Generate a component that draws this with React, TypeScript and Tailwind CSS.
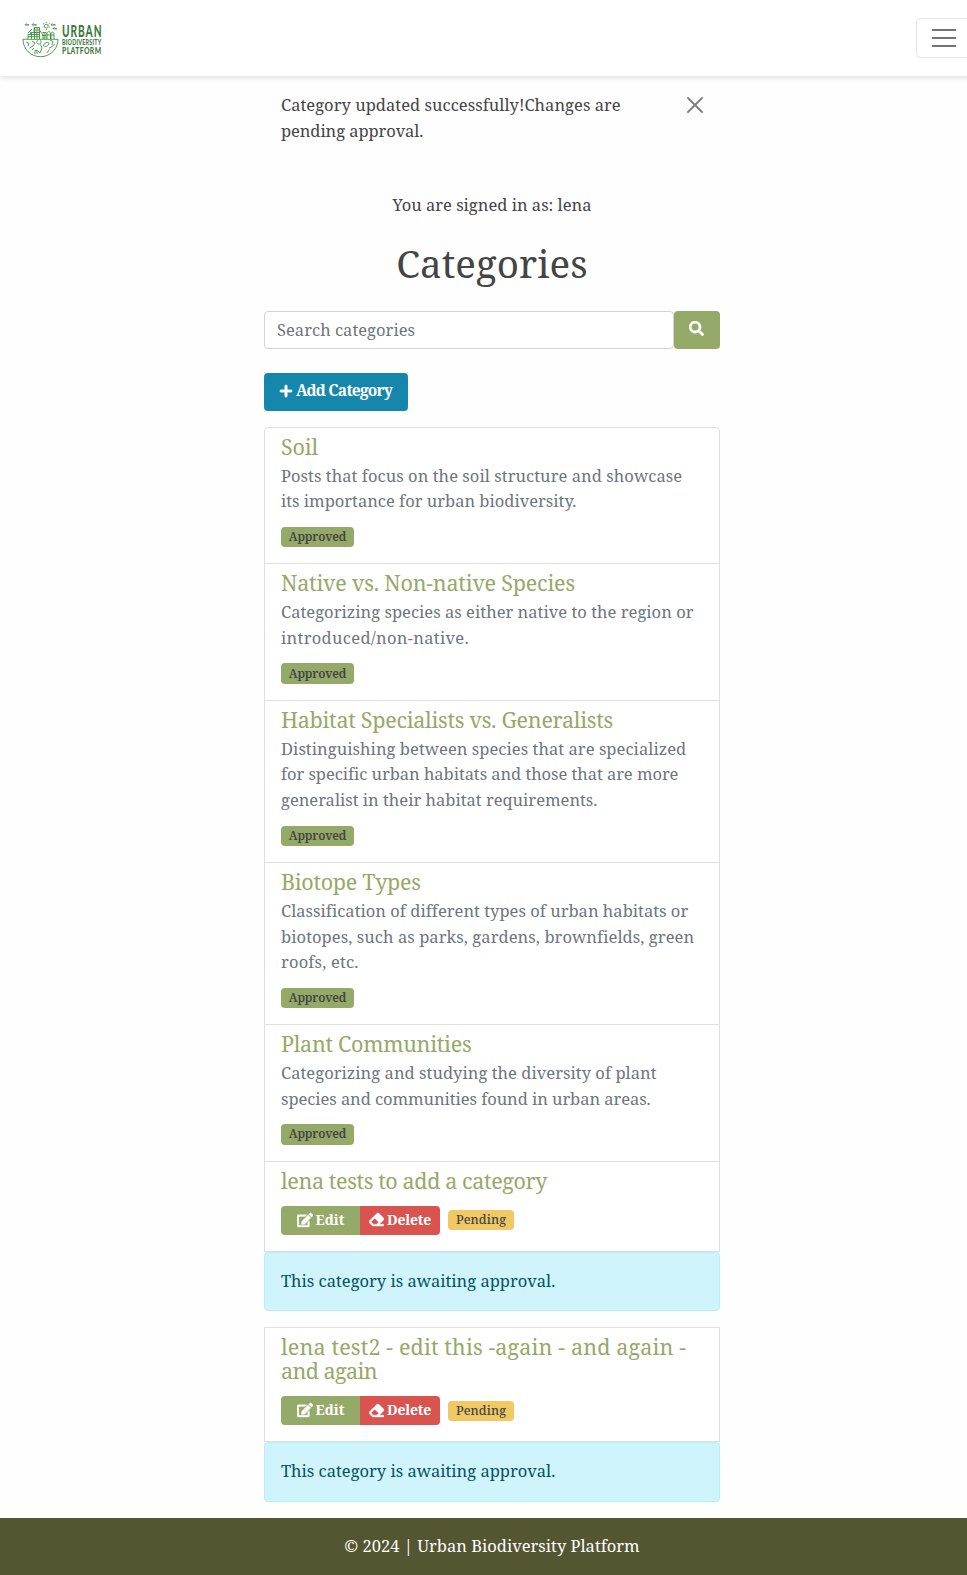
import { FaSearch, FaPlus, FaEdit, FaEraser } from "react-icons/fa";

type Line = { text: string; tracking?: string };
type Category = { title: Line[]; lines?: Line[]; pending?: boolean };

const categories: Category[] = [
  {
    title: [{ text: "Soil", tracking: "tracking-[-0.15px]" }],
    lines: [
      { text: "Posts that focus on the soil structure and showcase", tracking: "tracking-[0.06px]" },
      { text: "its importance for urban biodiversity." },
    ],
  },
  {
    title: [{ text: "Native vs. Non-native Species", tracking: "tracking-[-0.21px]" }],
    lines: [
      { text: "Categorizing species as either native to the region or", tracking: "tracking-[0.03px]" },
      { text: "introduced/non-native.", tracking: "tracking-[0.32px]" },
    ],
  },
  {
    title: [{ text: "Habitat Specialists vs. Generalists", tracking: "tracking-[-0.28px]" }],
    lines: [
      { text: "Distinguishing between species that are specialized", tracking: "tracking-[0.05px]" },
      { text: "for specific urban habitats and those that are more", tracking: "tracking-[-0.05px]" },
      { text: "generalist in their habitat requirements." },
    ],
  },
  {
    title: [{ text: "Biotope Types", tracking: "tracking-[-0.29px]" }],
    lines: [
      { text: "Classification of different types of urban habitats or", tracking: "tracking-[0.02px]" },
      { text: "biotopes, such as parks, gardens, brownfields, green", tracking: "tracking-[0.07px]" },
      { text: "roofs, etc.", tracking: "tracking-[0.17px]" },
    ],
  },
  {
    title: [{ text: "Plant Communities", tracking: "tracking-[-0.28px]" }],
    lines: [
      { text: "Categorizing and studying the diversity of plant", tracking: "tracking-[0.04px]" },
      { text: "species and communities found in urban areas.", tracking: "tracking-[-0.06px]" },
    ],
  },
  { title: [{ text: "lena tests to add a category", tracking: "tracking-[-0.38px]" }], pending: true },
  {
    title: [
      { text: "lena test2 - edit this -again - and again -", tracking: "tracking-[0.15px]" },
      { text: "and again", tracking: "tracking-[-0.58px]" },
    ],
    pending: true,
  },
];

function Lines({ lines }: { lines: Line[] }) {
  return (
    <>
      {lines.map((l) => (
        <span key={l.text} className={`block whitespace-nowrap ${l.tracking ?? ""}`}>
          {l.text}
        </span>
      ))}
    </>
  );
}

function Logo() {
  return (
    <svg width="90" height="44" viewBox="0 -4 90 44" className="mt-1 block overflow-visible" fill="none" stroke="#3f9142" strokeWidth="0.9">
      <path d="M0.8 17.3H36.2M1 17.3C1 27 8.700 34.700 18.500 34.700S36 27 36 17.300" />
      <path d="M6 17V12.500H8.500V10.500H12V5.500H17.500V17M12 8H17.500M12 10.500H17.500M8.500 12.500H17.500M6 14.700H17.500M12.500 5V17M15 5.500V17M9.500 11V17" />
      <path d="M17.500 8L21 13V17M20.500 10.500H24V17M22.200 10.500V17M25 17V11.500C25 9 28.500 9 28.500 11.500V17M29 17V12C29 9.500 32 9.500 32 12V17M20 13.500H24M25 13H32M6 11L10 7" />
      <circle cx="24.300" cy="4.200" r="1.900" />
      <path d="M24.300 0V1M21 1.500L22 2.300M27.500 1.500L26.600 2.300M20.800 5H21.500M27 5H27.800M24.300 7.200V8" />
      <path d="M3 3C3.300 1.500 5 1.500 5.300 2.500L7 3ZM10 3C10.300 1.500 12 1.500 12.500 2.500L14.500 3ZM29 3C29.500 1.500 31 1.500 31.500 2.500L33.500 3ZM31 6.800C31.300 5.500 33 5.500 33.300 6.300L35 6.800Z" />
      <path d="M4 20L7 21.500L6 24M10 19L13 21L11 24L7.500 26M16 18C14 20 14.500 22 17 22S19.500 19.500 18 18M18.500 22.500L20 26L18 31L15.500 28.500M13 32V28.500H15V32M21.500 24C22 20.500 25.500 20 27 21C26.500 24 24 25 21.500 24ZM28 18L31 19.500L30 23M27 26C30 25.500 31 23 33 22.500M25 31L27.500 27.500M10 28L12 26" />
      <g fill="#3e7a40" stroke="none" fontFamily="Lato, 'Liberation Sans', sans-serif" fontWeight="900">
        <text x="40" y="14.500" fontSize="16" letterSpacing="1.500" textLength="40.500" lengthAdjust="spacingAndGlyphs">URBAN</text>
        <text x="40" y="22.700" fontSize="6.800" letterSpacing="0.300" textLength="39.500" lengthAdjust="spacingAndGlyphs">BIODIVERSITY</text>
        <text x="40" y="31.700" fontSize="10" letterSpacing="0.600" textLength="39.500" lengthAdjust="spacingAndGlyphs">PLATFORM</text>
      </g>
    </svg>
  );
}

function CategoryItem({ category, first, standalone }: { category: Category; first: boolean; standalone: boolean }) {
  return (
    <div
      className={`border border-[#dfdfdf] bg-white px-4 pt-[7px] ${first ? "rounded-t" : ""} ${
        !first && !standalone ? "-mt-px" : ""
      }`}
    >
      <h2 className="text-[21.5px] leading-6 text-[#95a968]">
        <Lines lines={category.title} />
      </h2>
      {category.lines && (
        <p className="mt-1 text-[16.5px] leading-[25.6px] text-[#6c757d]">
          <Lines lines={category.lines} />
        </p>
      )}
      {category.pending ? (
        <div className="mt-[13px] mb-4 flex items-center">
          <button className="flex h-[29px] w-[79px] items-center justify-center gap-[3px] rounded-l bg-[#95a968] pb-px text-sm font-bold text-white">
            <FaEdit className="size-4" stroke="currentColor" strokeWidth="12" />
            Edit
          </button>
          <button className="flex h-[29px] w-20 items-center justify-center gap-[3px] rounded-r bg-[#d9534f] pb-px text-sm font-bold tracking-[-0.23px] text-white">
            <FaEraser className="size-[15px]" stroke="currentColor" strokeWidth="12" />
            Delete
          </button>
          <span className="ml-2 flex h-5 w-[66px] items-center justify-center rounded bg-[#f0c864] text-[12.5px] font-medium tracking-[0.08px] text-[#444]">
            Pending
          </span>
        </div>
      ) : (
        <div className="flex h-[49.4px] pt-[13px]">
          <span className="flex h-[20.400px] w-[73px] items-center justify-center rounded bg-[#95a968] text-xs font-semibold tracking-[-0.15px] text-[#444]">
            Approved
          </span>
        </div>
      )}
    </div>
  );
}

export default function App() {
  return (
    <div className="w-full overflow-hidden bg-[#fefefe] font-['Noto_Serif','DejaVu_Serif_Condensed','DejaVu_Serif',serif] text-[16.5px] leading-[25.6px] text-[#444]">
      <div className="w-[984px]">
        <header className="flex h-[76px] items-center justify-between bg-white pr-3 pl-[22px] shadow-[0_2px_5px_rgba(0,0,0,0.12)]">
          <Logo />
          <button className="flex h-10 w-14 flex-col items-center justify-center gap-1.5 rounded border border-[#e5e5e5]" aria-label="Menu">
            <span className="h-0.5 w-6 bg-[#737373]" />
            <span className="h-0.5 w-6 bg-[#737373]" />
            <span className="h-0.5 w-6 bg-[#737373]" />
          </button>
        </header>

        <main className="mx-auto w-[456px] pb-4">
          <div className="flex h-[101px] justify-between px-[17px] pt-4">
            <p>
              <Lines
                lines={[
                  { text: "Category updated successfully!Changes are", tracking: "tracking-[0.035px]" },
                  { text: "pending approval.", tracking: "tracking-[-0.08px]" },
                ]}
              />
            </p>
            <svg width="16" height="16" viewBox="0 0 16 16" className="mt-[5px]" stroke="#7f7f7f" strokeWidth="1.900" strokeLinecap="round">
              <path d="M1 1L15 15M15 1L1 15" />
            </svg>
          </div>

          <p className="mt-[15px] text-center">You are signed in as: lena</p>
          <h1 className="mt-[21px] mb-6 text-center text-[38.5px] leading-[48px] tracking-[0.05px]">Categories</h1>

          <div className="flex h-[38px]">
            <div className="flex flex-1 items-center rounded border border-[#ced4da] bg-white px-3 pt-px tracking-[0.03px] text-[#6c757d]">
              Search categories
            </div>
            <button className="flex w-[46px] items-center justify-center rounded bg-[#95a968] pr-px pb-[3px] text-white" aria-label="Search">
              <FaSearch className="size-[15px]" stroke="currentColor" strokeWidth="12" />
            </button>
          </div>

          <button className="mt-6 flex h-[38px] w-36 items-center justify-center gap-[3px] rounded bg-[#1687ac] pr-px pb-[2px] text-[15.5px] font-bold tracking-[-0.78px] text-white">
            <FaPlus className="size-3.5" stroke="currentColor" strokeWidth="12" />
            Add Category
          </button>

          <ul className="mt-4">
            {categories.map((c, i) => (
              <li key={c.title[0].text}>
                <CategoryItem category={c} first={i === 0} standalone={i === categories.length - 1} />
                {c.pending && (
                  <div className="mb-4 rounded border border-[#b6effb] bg-[#cff4fc] px-4 pt-[15px] pb-[17px] text-[#055160]">
                    This category is awaiting approval.
                  </div>
                )}
              </li>
            ))}
          </ul>
        </main>

        <footer className="-mt-4 h-[57.6px] bg-[#535630] pt-[15px] text-center text-white">
          © 2024 | Urban Biodiversity Platform
        </footer>
      </div>
    </div>
  );
}
